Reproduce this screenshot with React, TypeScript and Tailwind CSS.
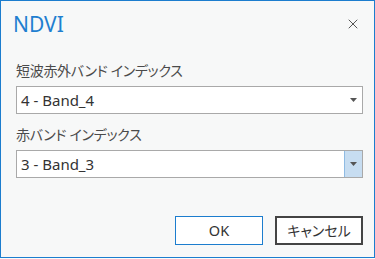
import { X } from 'lucide-react';

const font = { fontFamily: '"Noto Sans", "Noto Sans CJK JP", sans-serif' };

const Caret = () => (
    <svg width="7" height="4" viewBox="0 0 7 4" className="fill-[#555]">
        <polygon points="0,0 7,0 3.5,4" />
    </svg>
);

const BandSelect = ({ value, active }: { value: string; active?: boolean }) => (
    <div className="flex h-[28px] w-[347px] items-stretch border border-[#a9a9a9] bg-white">
        <div className="flex flex-1 items-center pl-[4px] text-[15px] text-[#333]">{value}</div>
        {active ? (
            <div className="flex w-[18px] items-center justify-center border-l border-[#8fbbe3] bg-[#c7ddf1]">
                <Caret />
            </div>
        ) : (
            <div className="flex w-[18px] items-center justify-center">
                <Caret />
            </div>
        )}
    </div>
);

export default function App() {
    return (
        <div className="h-[259px] w-[375px] bg-[#fbfbfb] [font-feature-settings:'palt']" style={font}>
            <div className="flex h-[258px] w-[375px] flex-col border border-[#1c7dce] bg-[#f7f8f8]">
                <div className="flex items-start justify-between pl-[12px] pr-[13px] pt-[8px]">
                    <h1 className="text-[21px] leading-[30px] text-[#1f7fd0]">NDVI</h1>
                    <X size={16} strokeWidth={1.5} className="mt-[7px] text-[#555]" />
                </div>

                <div className="mt-[23px] flex flex-col pl-[15px]">
                    <label className="text-[14px] leading-[18px] tracking-[-0.3px] text-[#4a4a4a]">短波赤外バンド インデックス</label>
                    <div className="mt-[6px]">
                        <BandSelect value="4 - Band_4" />
                    </div>
                    <label className="mt-[12px] text-[14px] leading-[18px] tracking-[-0.3px] text-[#4a4a4a]">赤バンド インデックス</label>
                    <div className="mt-[6px]">
                        <BandSelect value="3 - Band_3" active />
                    </div>
                </div>

                <div className="mt-auto mb-[12px] flex justify-end gap-[12px] pr-[11px]">
                    <button className="h-[29px] w-[88px] border-[1.5px] border-[#1c7dce] bg-white text-[14.5px] text-[#333]">
                        OK
                    </button>
                    <button className="h-[29px] w-[88px] border-2 border-[#444] bg-white text-[14px] text-[#333]">
                        キャンセル
                    </button>
                </div>
            </div>
        </div>
    );
}
